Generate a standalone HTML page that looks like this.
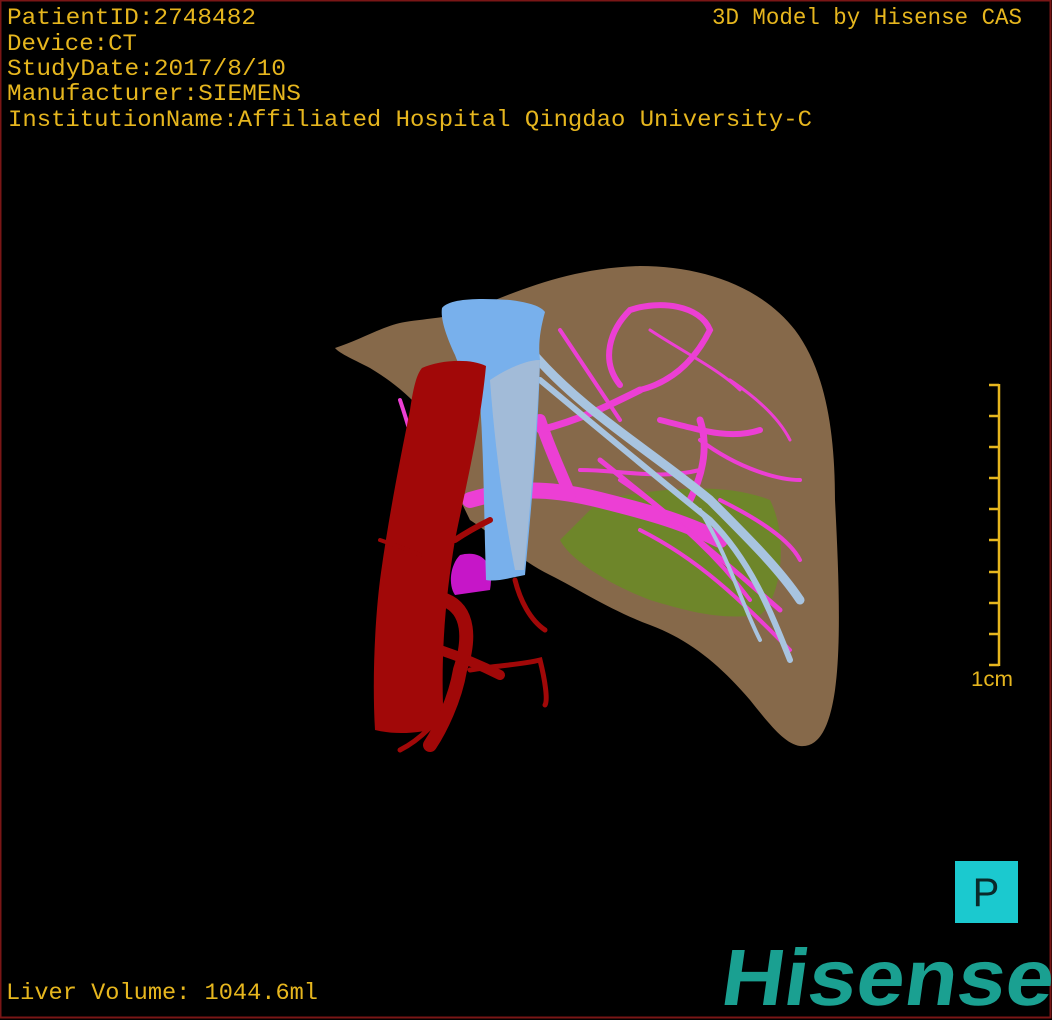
<!DOCTYPE html>
<html><head><meta charset="utf-8"><style>
html,body{margin:0;padding:0;background:#000;}
svg{display:block}
</style></head><body>
<svg width="1052" height="1020" viewBox="0 0 1052 1020" xmlns="http://www.w3.org/2000/svg">
<rect x="0" y="0" width="1052" height="1020" fill="#000"/>
<rect x="0.5" y="0.5" width="1050" height="1017" fill="none" stroke="#7a1616" stroke-width="2"/>
<g font-family="Liberation Mono, monospace" font-size="23" fill="#e6b61e">
<text x="7" y="24" textLength="249" lengthAdjust="spacingAndGlyphs">PatientID:2748482</text>
<text x="7" y="50" textLength="130" lengthAdjust="spacingAndGlyphs">Device:CT</text>
<text x="7" y="75" textLength="279" lengthAdjust="spacingAndGlyphs">StudyDate:2017/8/10</text>
<text x="7" y="100" textLength="294" lengthAdjust="spacingAndGlyphs">Manufacturer:SIEMENS</text>
<text x="8" y="126" textLength="804" lengthAdjust="spacingAndGlyphs">InstitutionName:Affiliated Hospital Qingdao University-C</text>
<text x="712" y="24" textLength="310" lengthAdjust="spacingAndGlyphs">3D Model by Hisense CAS</text>
<text x="6" y="999" textLength="312" lengthAdjust="spacingAndGlyphs">Liver Volume: 1044.6ml</text>
</g>
<g stroke="#e6b61e" stroke-width="2.5">
<line x1="999" y1="384" x2="999" y2="666"/>
<line x1="989" y1="385" x2="999" y2="385"/><line x1="989" y1="416" x2="999" y2="416"/>
<line x1="989" y1="447" x2="999" y2="447"/><line x1="989" y1="478" x2="999" y2="478"/>
<line x1="989" y1="509" x2="999" y2="509"/><line x1="989" y1="540" x2="999" y2="540"/>
<line x1="989" y1="572" x2="999" y2="572"/><line x1="989" y1="603" x2="999" y2="603"/>
<line x1="989" y1="634" x2="999" y2="634"/><line x1="989" y1="665" x2="999" y2="665"/>
</g>
<text x="971" y="686" font-family="Liberation Sans, sans-serif" font-size="21" fill="#e6b61e" textLength="42" lengthAdjust="spacingAndGlyphs">1cm</text>
<rect x="955" y="861" width="63" height="62" fill="#1bc9cf"/>
<text x="986" y="906" text-anchor="middle" font-family="Liberation Sans, sans-serif" font-size="40" fill="#0a2a2a">P</text>
<text x="720" y="1005" font-family="Liberation Sans, sans-serif" font-weight="bold" font-size="80" fill="#1aa091" textLength="332" lengthAdjust="spacingAndGlyphs" transform="skewX(-8) translate(140,0)">Hisense</text>

<path d="M335,348 C360,340 385,325 405,322 C430,318 450,318 470,310 C520,290 570,268 640,266 C700,266 760,285 795,330 C825,370 835,430 835,500 C838,560 842,640 835,690 C830,725 820,748 800,746 C785,744 770,725 750,700 C720,665 690,640 650,625 C610,610 580,590 550,575 C520,560 500,540 470,520 C450,480 440,450 430,420 C410,395 390,380 370,368 C355,360 340,354 335,348 Z" fill="#86694a"/>
<path d="M600,500 C650,490 720,480 770,500 C790,540 780,600 760,615 C720,620 690,612 650,600 C610,585 570,560 560,540 Z" fill="#6a8c24" opacity="0.85"/>
<g stroke="#ec3fd4" fill="none" stroke-linecap="round">
<path d="M470,500 C520,485 560,490 600,500 C640,510 680,520 720,540" stroke-width="16"/>
<path d="M540,420 C550,450 560,470 570,495" stroke-width="12"/>
<path d="M540,430 C580,420 610,405 640,390" stroke-width="7"/>
<path d="M640,390 C680,380 700,350 710,330 C700,305 660,300 630,310 C610,330 600,360 620,385" stroke-width="6"/>
<path d="M660,420 C700,430 730,440 760,430" stroke-width="6"/>
<path d="M700,420 C710,450 700,480 690,500" stroke-width="7"/>
<path d="M600,460 C650,500 700,540 780,610" stroke-width="5"/>
<path d="M620,480 C680,520 720,560 750,600" stroke-width="4"/>
<path d="M640,530 C700,560 740,600 790,650" stroke-width="4"/>
<path d="M560,330 C580,360 600,390 620,420" stroke-width="4"/>
<path d="M700,440 C740,470 780,480 800,480" stroke-width="4"/>
<path d="M720,500 C760,520 790,540 800,560" stroke-width="4"/>
<path d="M580,470 C620,470 660,480 700,470" stroke-width="4"/>
<path d="M400,400 C410,430 415,450 420,470" stroke-width="4"/>
<path d="M730,380 C760,400 780,420 790,440" stroke-width="3"/>
<path d="M650,330 C680,350 720,370 740,390" stroke-width="3"/>
</g>
<path d="M460,555 C480,550 495,560 490,590 L455,595 C448,585 450,565 460,555 Z" fill="#c616c8"/>
<g stroke="#a8c4e0" fill="none" stroke-linecap="round">
<path d="M530,350 C580,410 650,450 710,500 C750,540 780,570 800,600" stroke-width="9"/>
<path d="M540,380 C600,430 660,480 710,520 C750,560 770,610 790,660" stroke-width="6"/>
<path d="M700,510 C730,560 740,600 760,640" stroke-width="4"/>
</g>
<path d="M442,308 C450,298 480,298 510,300 C525,302 540,305 545,312 C540,330 538,345 540,360 C538,440 530,520 525,575 C510,578 495,582 486,580 C484,520 484,460 480,400 C470,380 460,370 455,355 C448,340 440,320 442,308 Z" fill="#78b0ec"/>
<path d="M490,380 C505,370 525,360 540,360 C536,440 530,510 524,570 L515,570 C505,520 495,450 490,380 Z" fill="#a6bcd6" opacity="0.9"/>
<path d="M422,368 C440,360 470,358 486,366 C480,430 465,490 455,540 C445,600 440,660 444,726 C420,734 395,735 375,730 C372,680 375,620 380,580 C388,520 400,460 410,410 C413,390 416,375 422,368 Z" fill="#a10808"/>
<g stroke="#a10808" fill="none" stroke-linecap="round">
<path d="M445,600 C470,610 470,640 460,670 C455,700 440,730 430,745" stroke-width="14"/>
<path d="M440,650 C470,660 490,670 500,675" stroke-width="10"/>
<path d="M470,670 C500,665 520,665 540,660 C545,680 548,700 545,705" stroke-width="5"/>
<path d="M515,580 C520,600 530,620 545,630" stroke-width="5"/>
<path d="M455,540 C470,530 480,525 490,520" stroke-width="6"/>
<path d="M380,540 C395,545 410,550 420,555" stroke-width="4"/>
<path d="M450,700 C440,720 420,740 400,750" stroke-width="5"/>
</g>
</svg>
</body></html>
